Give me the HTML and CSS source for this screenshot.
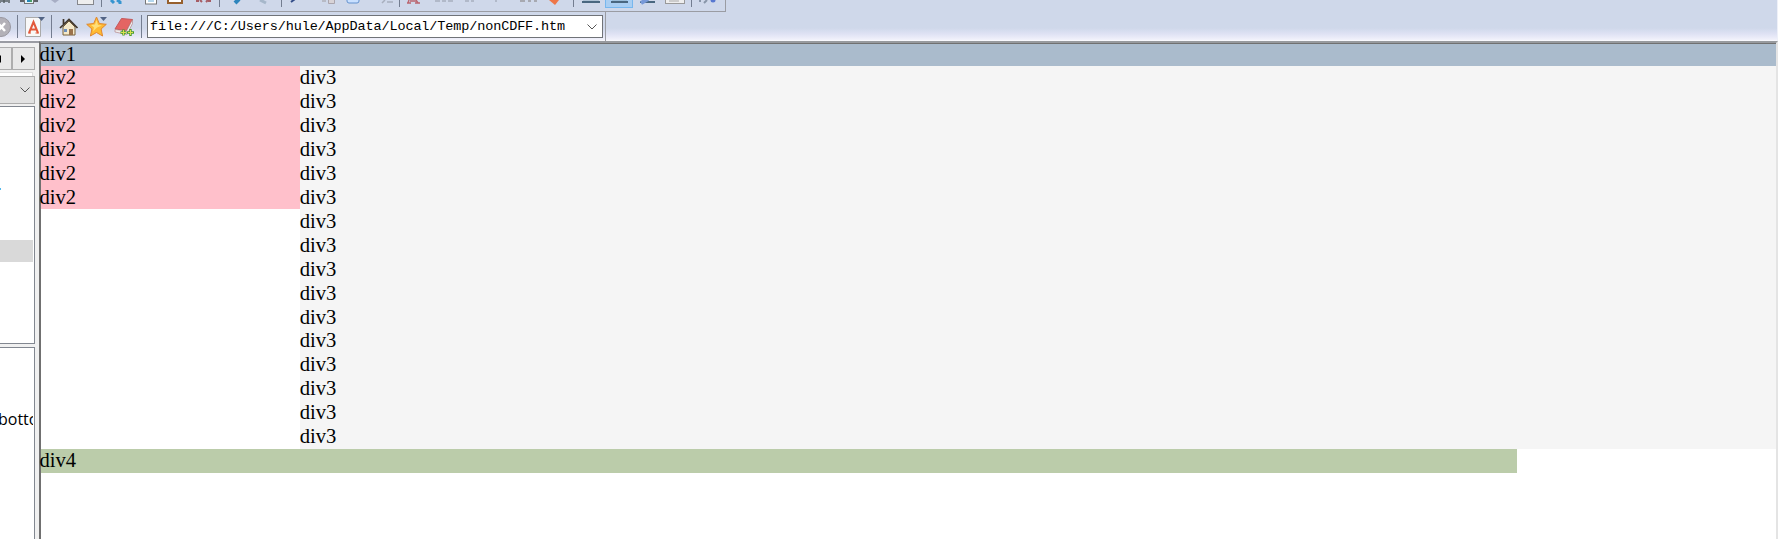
FILE: index.html
```
<!DOCTYPE html>
<html lang="en"><head><meta charset="utf-8"><title>nonCDFF.htm</title><link rel="stylesheet" href="styles.css"></head>
<body>
<header class="chrome">
<div class="tools"><svg width="725" height="11" viewBox="0 0 725 11">
<path d="M0 0v3M4 0v3M9 0v3M1 1h7" fill="none" stroke="#596265" stroke-width="1.500"/>
<path d="M20 1h5M33 1h5" stroke="#5d6268" stroke-width="2"/><rect x="24.500" y="-4" width="9" height="7.500" fill="#e5f4fa" stroke="#777"/><path d="M27 1h3" stroke="#2588b8" stroke-width="2"/><path d="M31 0v2" stroke="#4a9f67" stroke-width="2"/>
<path d="M51 0h8l-4 3z" fill="#a7aec4"/>
<rect x="77.500" y="-5" width="16" height="9.500" fill="#eee" stroke="#85878c"/>
<path d="M101.500 0v7M219.500 0v7M281.500 0v7M399.500 0v7M573.500 0v7M691.500 0v7" stroke="#737d90"/>
<path d="M111 0l3 3M117 0l3 2v2" fill="none" stroke="#3795d0" stroke-width="3"/>
<rect x="145.500" y="-5" width="11" height="9" fill="#fff" stroke="#777"/><path d="M148 1h6" stroke="#69aedc"/>
<rect x="168" y="-5" width="14" height="8" fill="#fff" stroke="#97602e" stroke-width="2"/>
<path d="M196 1h3M200 0l2 2M206 2l2-2M208 1h3" stroke="#a65d65" stroke-width="2"/>
<path d="M235 3l4-4" stroke="#2d85bd" stroke-width="4"/><path d="M260 0l6 3" stroke="#a6b7ca" stroke-width="3"/>
<path d="M291 2l4-3" stroke="#334d88" stroke-width="2"/><path d="M322 1h4" stroke="#b7bac5" stroke-width="2"/><path d="M328.500 0v3.500h6V0" stroke="#aaa5ad" fill="#d8d3d7"/>
<rect x="347" y="-5" width="12" height="8" rx="2" fill="#c9e0ff" stroke="#6391ce"/>
<path d="M382 3l3-3M387 2h6M435 1h5M442 1h4M448 1h5M465 1h4M471 1h3M495 1h2" stroke="#a8afbe" stroke-width="1.500"/>
<path d="M407 3h4M415 3h5M409 0l-1 3M416 0l2 3M410 1h6" stroke="#bb6670" stroke-width="1.500"/>
<path d="M520 1h5M528 1h3M534 1h3" stroke="#a7a9b1" stroke-width="2"/><path d="M549 0h10l-4 5z" fill="#ee7648"/>
<rect x="605.500" y="-2" width="27" height="9.500" fill="#a9cef2" stroke="#77b7ee"/>
<path d="M582 2h18M611 2h17M640 2h15" stroke="#496780" stroke-width="2"/><path d="M583 0h16M612 0h15" stroke="#8eabc0"/>
<path d="M641 3l7-4" stroke="#7799d8" stroke-width="4"/><rect x="665.500" y="-4" width="19" height="7.500" fill="#eee" stroke="#999"/><path d="M669 1h10" stroke="#aaa"/>
<path d="M700 0v2M704 3l3-3" stroke="#8996a9" stroke-width="2"/><circle cx="713" cy="0" r="2.500" fill="#5878d0"/></svg></div>
<div class="address-row"><svg width="146" height="29" viewBox="0 12 146 29">
<circle cx="1" cy="27" r="9.500" fill="#b3b1b8" stroke="#9a98a0"/><path d="M-2 23l7 8m0-8l-7 8" stroke="#fff" stroke-width="2.500"/>
<path d="M17.500 15v23M51.500 15v23M141.500 15v23" stroke="#747d90"/>
<path d="M25.500 17.500h15v19h-15z" fill="#f8f8f8" stroke="#aaa"/><path d="M29 33l4.500-11L38 33M31 29.500h5" fill="none" stroke="#e2583b" stroke-width="2"/><path d="M28 33h3M35.500 33H39" stroke="#e2583b"/>
<path d="M38 17h7l-3.500 4zM100 17h7l-3.500 4z" fill="#526485"/>
<path d="M63 27v8h12v-8l-6-6z" fill="#f5e9ca" stroke="#77613b"/><path d="M60 28l9-8.500 8.500 8.500M63.500 19v5" fill="none" stroke="#40352a" stroke-width="1.700"/><path d="M69 29h4v6h-4z" fill="#9b724b"/><path d="M64 29h3v3h-3z" fill="#6d8fbd"/>
<path d="M96.500 17l2.800 6.500 7 .8-5.200 4.700 1.500 7-6.100-3.500-6.100 3.500 1.500-7-5.200-4.700 7-.8z" fill="#ffba32" stroke="#df8730"/><path d="M96.500 20l1.500 5 4 .5-5 2-4 4 1-4-3-2.500 4-.5z" fill="#ffdf79"/>
<path d="M121.500 18.500l11 1-6 11-11.500-1.500z" fill="#e46563" stroke="#c4585a"/><path d="M115 29.500l11.500 1.500 6-11.500v4l-5.500 11-12-2.500z" fill="#eee" stroke="#af7778" stroke-width=".6"/><path d="M120.500 32.500h6m-3-3v6M127 32.500h7m-3.500-3.500v7" stroke="#479a2b" stroke-width="2.400"/><path d="M121 32.500h5m-2.500-2.500v5M128 32.500h5m-2.500-2.500v5" stroke="#d9df50"/></svg>
<div class="address"><span>file:///C:/Users/hule/AppData/Local/Temp/nonCDFF.htm</span><svg width="10" height="6" viewBox="0 0 10 6"><path d="M.5.5L5 5 9.500.5" fill="none" stroke="#555"/></svg></div></div>
</header>
<main class="workspace">
<aside class="sidebar">
<div class="arrows"><button><svg width="5" height="8"><path d="M0 4l4-4v8z"/></svg></button><button><svg width="5" height="8"><path d="M0 0l4 4-4 4z"/></svg></button></div>
<div class="strip"></div>
<div class="select"><svg width="10" height="6"><path d="M.5.500L5 5 9.500.5" fill="none" stroke="#555"/></svg></div>
<div class="panel tree"><i class="mark"></i><i class="selected"></i></div>
<div class="panel props"><span>botto</span></div>
</aside>
<section class="page">
<div class="one"><p>div1</p></div>
<div class="columns"><div class="two"><p>div2<br>div2<br>div2<br>div2<br>div2<br>div2</p></div><div class="three"><p>div3<br>div3<br>div3<br>div3<br>div3<br>div3<br>div3<br>div3<br>div3<br>div3<br>div3<br>div3<br>div3<br>div3<br>div3<br>div3</p></div></div>
<div class="four"><p>div4</p></div>
</section></main></body></html>
```
FILE: styles.css
```
* { box-sizing: border-box; }
body { margin: 0; width: 1778px; height: 539px; overflow: hidden; background: #f0f0f0; }
svg { display: block; flex: none; }
.chrome { height: 41px; background: linear-gradient(#cfd8ea 0, #cfd8ea 28px, #dfe2f4 34px, #f2f2fb 40px, #fff); border-right: 1px solid #eef0f8; }
.tools { width: 726px; height: 12px; border-right: 1px solid #9a9ca3; border-bottom: 1px solid #9a9ca3; overflow: hidden; }
.address-row { width: 606px; height: 29px; display: flex; border-right: 1px solid #9a9ca3; }
.address { width: 456px; height: 23px; margin: 3px 0 0 1px; border: 1px solid #707378; background: #fff; display: flex; align-items: center; justify-content: space-between; padding: 0 5px 0 2px; font: 13.500px/21px "Liberation Mono", monospace; letter-spacing: -.12px; white-space: nowrap; }
.workspace { height: 498px; display: flex; }
.sidebar { width: 39px; border-top: 2px solid #9a9ca3; overflow: hidden; }
.arrows { display: flex; margin-top: 4px; height: 23px; }
.arrows button { width: 23px; height: 23px; border: 1px solid #adadad; background: #e8e8e8; padding: 0; display: flex; align-items: center; justify-content: center; }
.arrows button:first-child { width: 12px; border-left: 0; justify-content: flex-start; }
.arrows button:first-child svg { margin-left: -3px; }
.strip { height: 4px; width: 33px; margin: 2px 0 0; border-top: 1px solid #ddd; border-right: 1px solid #ddd; background: #fff; }
.select { height: 28px; width: 35px; border: 1px solid #adadad; border-left: 0; background: #e2e2e2; display: flex; align-items: center; justify-content: flex-end; padding-right: 4px; }
.panel { width: 35px; border: 1px solid #828790; border-left: 0; background: #fff; }
.tree { height: 238px; margin-top: 2px; padding-top: 81px; }
.mark { display: block; width: 1px; height: 2px; background: #53b9ed; }
.selected { display: block; width: 33px; height: 22px; margin-top: 50px; background: #d9d9d9; }
.props { height: 202px; margin-top: 3px; padding: 59px 1px 0 0; }
.props span { display: block; width: 33px; overflow: hidden; text-indent: -2px; font: 16px/24px "Open Sans", sans-serif; }
.page { width: 1739px; border: solid; border-width: 2px 2px 0; border-color: #979a9e #e4e4e4 #fff #707070; background: #fff; font: 20.600px/23.950px "Liberation Serif", serif; color: #000; }
.page p { margin: 0 0 0 -1.500px; }
.one { height: 23px; background: #aabbcc; border-top: 1px solid #707070; display: flow-root; }
.page .one p { margin-top: -1px; }
.columns { display: flex; height: 383px; }
.two { width: 259px; height: 143px; background: #ffc0cb; display: flow-root; }
.three { flex: 1; background: #f5f5f5; display: flow-root; }
.page .three p { margin-left: -.3px; }
.four { width: 1476px; height: 24px; background: #bbccaa; display: flow-root; }
```
